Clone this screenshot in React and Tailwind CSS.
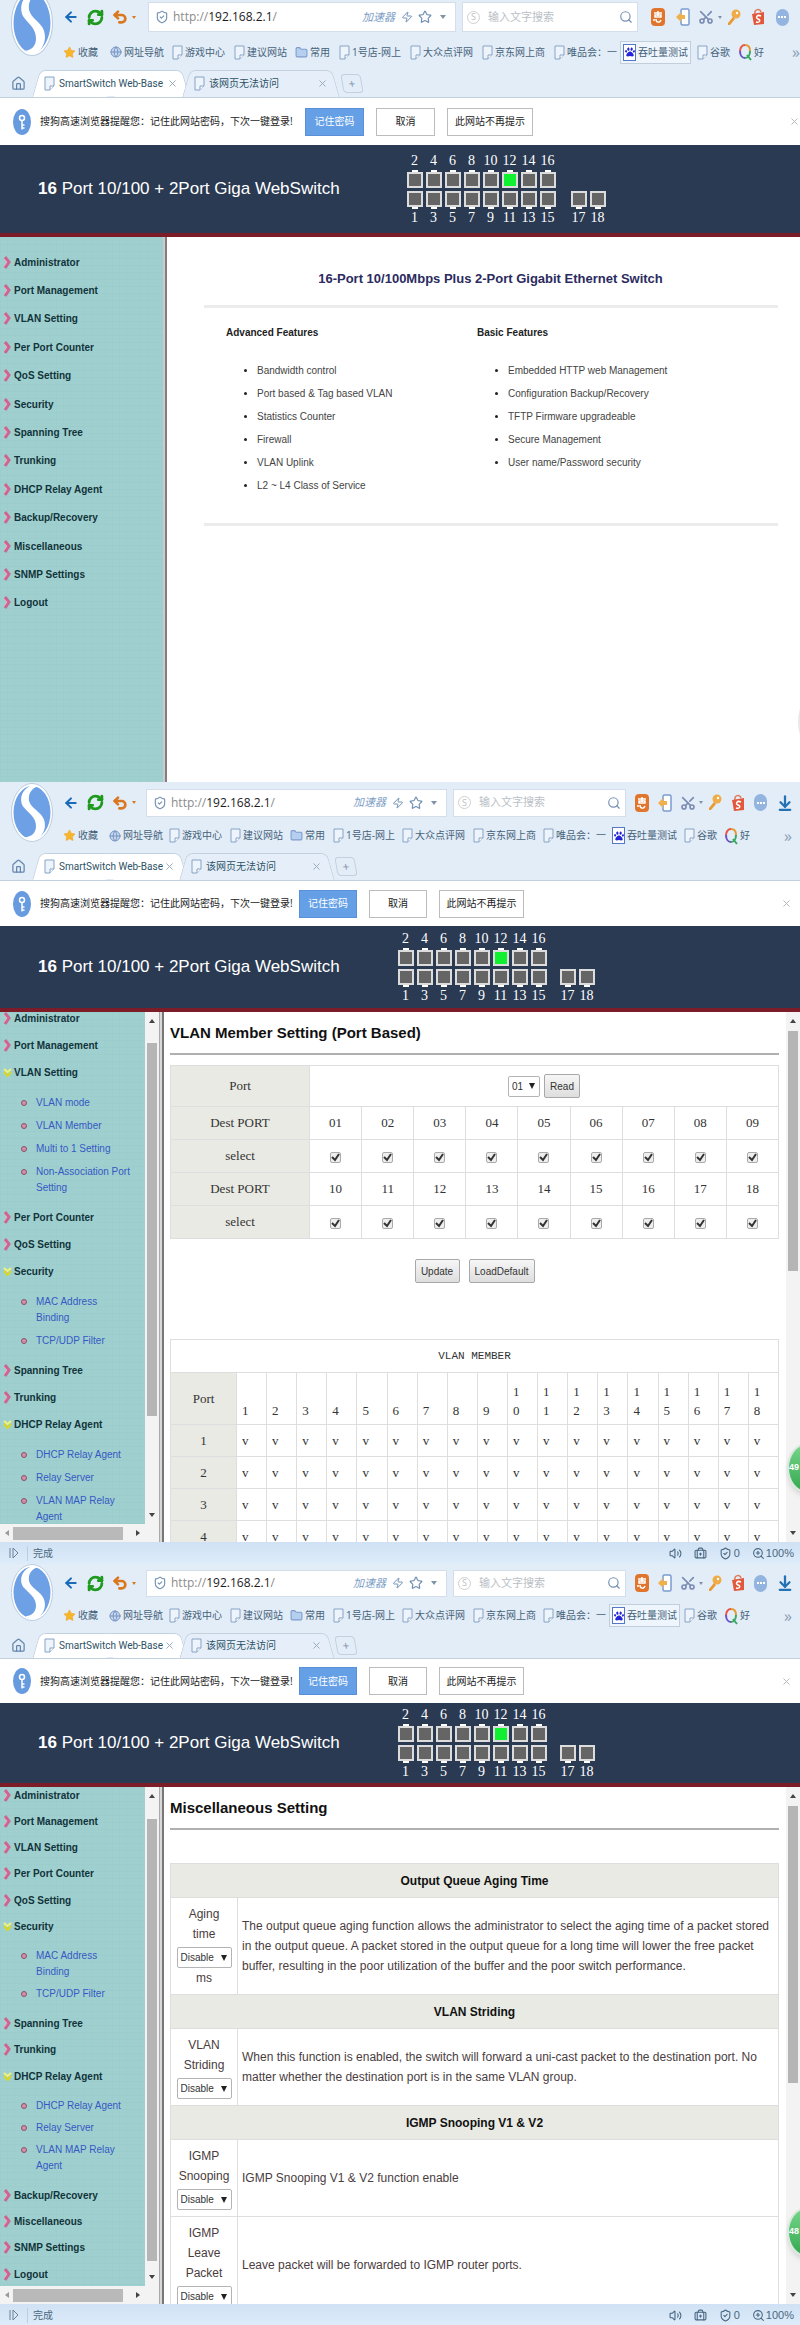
import React from "react";
import {
  ArrowLeft,
  ArrowDownToLine,
  BriefcaseMedical,
  Folder,
  Globe,
  House,
  RefreshCw,
  Scissors,
  Search,
  ShieldCheck,
  Star,
  Undo2,
  Volume2,
  X,
  Zap,
  ZoomIn,
} from "lucide-react";
import { FaPaw } from "react-icons/fa";

const BOOKMARKS = [
  { label: "收藏", icon: "star" },
  { label: "网址导航", icon: "globe" },
  { label: "游戏中心", icon: "page" },
  { label: "建议网站", icon: "page" },
  { label: "常用", icon: "folder" },
  { label: "1号店-网上", icon: "page" },
  { label: "大众点评网", icon: "page" },
  { label: "京东网上商", icon: "page" },
  { label: "唯品会：一", icon: "page" },
  { label: "吞吐量测试", icon: "paw" },
  { label: "谷歌", icon: "page" },
  { label: "好", icon: "ring" },
];

const MENU = [
  "Administrator",
  "Port Management",
  "VLAN Setting",
  "Per Port Counter",
  "QoS Setting",
  "Security",
  "Spanning Tree",
  "Trunking",
  "DHCP Relay Agent",
  "Backup/Recovery",
  "Miscellaneous",
  "SNMP Settings",
  "Logout",
];

const SUBMENU = {
  "VLAN Setting": ["VLAN mode", "VLAN Member", "Multi to 1 Setting", "Non-Association Port Setting"],
  Security: ["MAC Address Binding", "TCP/UDP Filter"],
  "DHCP Relay Agent": ["DHCP Relay Agent", "Relay Server", "VLAN MAP Relay Agent"],
};

const ADVANCED = [
  "Bandwidth control",
  "Port based & Tag based VLAN",
  "Statistics Counter",
  "Firewall",
  "VLAN Uplink",
  "L2 ~ L4 Class of Service",
];

const BASIC = [
  "Embedded HTTP web Management",
  "Configuration Backup/Recovery",
  "TFTP Firmware upgradeable",
  "Secure Management",
  "User name/Password security",
];

const PORTS = Array.from({ length: 18 }, (_, i) => i + 1);

// The home window is slightly larger than the two settings windows
const WINDOWS = {
  home: {
    toolbar: "h-[34px]",
    box: "h-[30px]",
    address: "ml-[12px]",
    search: "w-[176px]",
    tools: "w-[162px] pl-[8px]",
    tool: "w-[24px]",
    bookmarks: "h-[36px] grid-cols-[47px_62px_62px_61px_44px_71px_72px_72px_66px_77px_42px_1fr]",
    more: "pr-0",
    logo: "h-[66px] -mt-[10px]",
    tabs: "h-[28px]",
    tab: "w-[150px]",
    notice: "h-[47px]",
    noticeText: "w-[264px]",
    answer: "w-[59px]",
    never: "w-[86px]",
    close: "mr-0",
    header: "h-[92px]",
    title: "w-[367px]",
    gap: "ml-[12px]",
  },
  vlan: {
    toolbar: "h-[36px] pt-[5px]",
    box: "h-[28px]",
    address: "ml-[10px]",
    search: "w-[173px]",
    tools: "w-[174px] pl-[4px]",
    tool: "w-[23px]",
    bookmarks: "h-[35px] grid-cols-[46px_60px_61px_60px_43px_69px_71px_70px_66px_75px_41px_1fr]",
    more: "pr-[8px]",
    logo: "h-[59px] mt-[1px]",
    tabs: "h-[28px]",
    tab: "w-[147px]",
    notice: "h-[45px]",
    noticeText: "w-[258px]",
    answer: "w-[58px]",
    never: "w-[85px]",
    close: "mr-[8px]",
    header: "h-[86px]",
    title: "w-[358px]",
    gap: "ml-[10px]",
  },
  misc: {
    toolbar: "h-[34px] pt-[4px]",
    box: "h-[27px]",
    address: "ml-[10px]",
    search: "w-[173px]",
    tools: "w-[174px] pl-[4px]",
    tool: "w-[23px]",
    bookmarks: "h-[35px] grid-cols-[46px_60px_61px_60px_43px_69px_71px_70px_66px_75px_41px_1fr]",
    more: "pr-[8px]",
    logo: "h-[57px]",
    tabs: "h-[26px]",
    tab: "w-[147px]",
    notice: "h-[44px]",
    noticeText: "w-[258px]",
    answer: "w-[58px]",
    never: "w-[85px]",
    close: "mr-[8px]",
    header: "h-[84px]",
    title: "w-[358px]",
    gap: "ml-[10px]",
  },
};

const Logo = ({ className }) => (
  <svg viewBox="0 0 42 60" preserveAspectRatio="none" className={`w-[42px] shrink-0 ${className}`}>
    <ellipse cx="21" cy="30" rx="20.5" ry="29.5" fill="#fff" stroke="#b9cce0" strokeWidth="1" />
    <ellipse cx="21" cy="30" rx="18.5" ry="27" fill="#6ea0e6" />
    <path
      d="M21 2C9 7 8 19 13 25C18 31 25 35 25 44C25 51 20 55 14 55L22 59C32 55 36 46 33 37C30 29 20 26 18 18C17 11 20 6 27 3Z"
      fill="#fff"
    />
  </svg>
);

const PageIcon = () => (
  <svg width="11" height="15" viewBox="0 0 11 15" className="shrink-0" fill="#eef4fb" stroke="#86a3c6">
    <path d="M1 1h9v9l-4 4H1z" />
    <path d="M10 10H6v4" fill="#fff" />
  </svg>
);

const BookmarkIcon = ({ type }) => {
  if (type === "star") return <Star size={13} fill="#f7b52c" color="#f0a020" strokeWidth={1} />;
  if (type === "globe") return <Globe size={12} color="#7593c0" fill="#c9d8f0" strokeWidth={2} />;
  if (type === "folder") return <Folder size={13} color="#7d9ccb" fill="#b5cff0" strokeWidth={2} />;
  if (type === "paw")
    return (
      <span className="flex h-[17px] w-[13px] items-center justify-center border border-[#5577c8] bg-white">
        <FaPaw size={10} color="#2424d8" />
      </span>
    );
  if (type === "ring")
    return (
      <svg width="13" height="18" viewBox="0 0 13 18" fill="none" strokeWidth="2">
        <path d="M6 2C3 2 1 5 1 8" stroke="#e8554a" />
        <path d="M1 8C1 12 3 15 6 15" stroke="#6a53c8" />
        <path d="M6 2C10 2 11 5 11 8" stroke="#e39a35" />
        <path d="M11 8C11 12 9 15 6 15M8 12L12 17" stroke="#3aa860" />
      </svg>
    );
  return <PageIcon />;
};

const Tab = ({ title, active, width }) => (
  <div className={`relative flex h-full items-center ${width}`}>
    <span
      className={`absolute inset-y-0 left-0 w-1/2 -skew-x-[16deg] rounded-tl-md border-t border-l border-[#c3d0de] ${
        active ? "bg-white" : "bg-[#e6eff9]"
      }`}
    ></span>
    <span
      className={`absolute inset-y-0 right-0 w-1/2 skew-x-[16deg] rounded-tr-md border-t border-r border-[#c3d0de] ${
        active ? "bg-white" : "bg-[#e6eff9]"
      }`}
    ></span>
    <span className={`absolute inset-y-px left-[12px] right-[12px] ${active ? "bg-white" : "bg-[#e6eff9]"}`}></span>
    <a href="#" className="relative flex flex-1 items-center gap-[4px] pl-[8px] text-[#2c5265]">
      <PageIcon />
      <span className="font-[Roboto,'Noto_Sans_CJK_SC',sans-serif] text-[10px] whitespace-nowrap">{title}</span>
    </a>
    <button className="relative mr-[8px]" aria-label="关闭标签">
      <X size={11} color="#93a4b6" />
    </button>
  </div>
);

const BrowserChrome = ({ size, highlight }) => (
  <div className="bg-[#e3edf8]">
    <div className="flex overflow-hidden pl-[11px]">
      <Logo className={size.logo} />
      <div className="min-w-0 flex-1 pl-[10px]">
        <div className={`flex items-center ${size.toolbar}`}>
          <button aria-label="后退">
            <ArrowLeft size={16} color="#1a6ab8" strokeWidth={3} />
          </button>
          <button className="ml-[8px]" aria-label="刷新">
            <RefreshCw size={17} color="#1f9a1f" strokeWidth={4} />
          </button>
          <button className="ml-[8px] flex items-center gap-[4px]" aria-label="恢复">
            <Undo2 size={16} color="#d9781e" strokeWidth={4} />
            <span className="border-x-2 border-t-3 border-x-transparent border-t-[#d9781e]"></span>
          </button>
          <div className={`flex min-w-0 flex-1 items-center border border-[#d3deea] bg-white px-[6px] ${size.box} ${size.address}`}>
            <ShieldCheck size={14} color="#7793b5" className="shrink-0" />
            <a href="#" className="ml-[4px] text-xs text-[#8b8b8b]">
              http://<span className="text-[#1c1c1c]">192.168.2.1</span>/
            </a>
            <span className="ml-auto text-[11px] text-[#7ea0c6] italic">加速器</span>
            <Zap size={12} color="#7593b5" className="ml-[6px]" />
            <Star size={14} color="#6f8fb4" className="ml-[5px]" />
            <span className="mr-[3px] ml-[8px] border-x-3 border-t-4 border-x-transparent border-t-[#8093a8]"></span>
          </div>
          <div className={`ml-[6px] flex shrink-0 items-center border border-[#d3deea] bg-white px-[4px] ${size.box} ${size.search}`}>
            <span className="flex size-[13px] shrink-0 items-center justify-center rounded-full border border-[#d0d0d0] text-[9px] text-[#c0c0c0]">
              S
            </span>
            <input
              aria-label="搜索"
              placeholder="输入文字搜索"
              className="ml-[8px] w-full min-w-0 text-[11px] outline-none placeholder:text-[#b9c0c6]"
            />
            <Search size={14} color="#7490b4" className="shrink-0" />
          </div>
          <div className={`flex shrink-0 items-center overflow-hidden ${size.tools}`}>
            <button className={`flex shrink-0 justify-center ${size.tool}`} aria-label="优惠">
              <span className="flex h-[18px] w-[14px] items-center justify-center rounded-sm bg-[#e2752c]">
                <svg width="10" height="12" viewBox="0 0 10 12" fill="none" stroke="#fff" strokeWidth="1.5">
                  <path d="M1 2h8M5 0v5M2 4h6v2H2zM1 8v2M3 8c0 4 4 4 5 1" />
                </svg>
              </span>
            </button>
            <button className={`flex shrink-0 justify-center ${size.tool}`} aria-label="手机">
              <svg width="15" height="18" viewBox="0 0 15 18">
                <rect x="6" y="1" width="8" height="16" rx="1.5" fill="#fff" stroke="#7b9ccd" strokeWidth="1.5" />
                <path d="M1 9L6 4v3h4v4H6v3z" fill="#f1b04a" />
              </svg>
            </button>
            <button className={`flex shrink-0 items-center justify-center ${size.tool}`} aria-label="截图">
              <Scissors size={16} color="#7c8cb4" strokeWidth={2.5} className="-rotate-90" />
            </button>
            <span className="shrink-0 border-x-2 border-t-3 border-x-transparent border-t-[#8093a8]"></span>
            <button className={`flex shrink-0 justify-center ${size.tool}`} aria-label="密码">
              <svg width="14" height="17" viewBox="0 0 14 17">
                <circle cx="9" cy="5" r="4.500" fill="#f0ac48" />
                <circle cx="10" cy="4" r="1.200" fill="#fff" />
                <path d="M6 8L1 14v2h2l5-6" fill="#e89a34" />
              </svg>
            </button>
            <button className={`flex shrink-0 justify-center ${size.tool}`} aria-label="购物">
              <svg width="14" height="18" viewBox="0 0 14 18" fill="none">
                <path d="M4 6C3 1 9 0 10 4" stroke="#e07a5c" strokeWidth="1.5" />
                <path d="M1 6L13 4V16L3 17Z" fill="#e2583c" />
                <path d="M10 8C6 6 4 10 7 11C10 12 9 15 5 14" stroke="#fff" strokeWidth="1.5" />
              </svg>
            </button>
            <button className={`flex shrink-0 justify-center ${size.tool}`} aria-label="更多">
              <span className="flex h-[17px] w-[13px] items-center justify-center gap-px rounded-full bg-[#94b4e0]">
                <i className="size-[2px] bg-white"></i>
                <i className="size-[2px] bg-white"></i>
                <i className="size-[2px] bg-white"></i>
              </span>
            </button>
            <button className="ml-[4px] flex shrink-0 justify-center" aria-label="下载">
              <ArrowDownToLine size={18} color="#2272b4" strokeWidth={3} />
            </button>
          </div>
        </div>
        <div className={`grid items-center ${size.bookmarks}`}>
          {BOOKMARKS.map((item) => (
            <div key={item.label} className="flex items-center justify-between">
              <a
                href="#"
                className={`flex items-center gap-[2px] text-[10px] whitespace-nowrap text-[#45627a] ${
                  item.icon === "paw" ? "border px-[2px]" : ""
                } ${item.icon === "paw" && highlight ? "border-[#c3cedb] bg-[#eff5fc] py-[2px] text-[#1f2f3c]" : "border-transparent"}`}
              >
                <BookmarkIcon type={item.icon} />
                {item.label}
              </a>
              {item.icon === "ring" && <span className={`text-base text-[#8a9db3] ${size.more}`}>»</span>}
            </div>
          ))}
        </div>
      </div>
    </div>
    <div className={`flex items-center border-b border-[#c3d0de] ${size.tabs}`}>
      <button className="mr-[10px] ml-[11px]" aria-label="主页">
        <House size={15} color="#6486ad" />
      </button>
      <div className="flex h-full">
        <Tab title="SmartSwitch Web-Base" active width={size.tab} />
        <Tab title="该网页无法访问" width={size.tab} />
      </div>
      <button
        className="ml-[6px] flex h-[19px] w-[20px] skew-x-[10deg] items-center justify-center rounded-sm border border-[#c3d0de] text-xs text-[#7f92a6]"
        aria-label="新标签"
      >
        +
      </button>
    </div>
  </div>
);

const Notice = ({ size }) => (
  <div className={`flex items-center bg-white pl-[13px] text-[10px] text-[#222] ${size.notice}`}>
    <span className="flex h-[26px] w-[18px] items-center justify-center rounded-[50%] bg-[#679be0]">
      <svg width="8" height="16" viewBox="0 0 8 16" fill="none" stroke="#fff" strokeWidth="1.5">
        <circle cx="4" cy="4" r="2.5" />
        <path d="M4 6.500v9M4 11h2.500M4 14h2.500" />
      </svg>
    </span>
    <p className={`pl-[9px] whitespace-nowrap ${size.noticeText}`}>搜狗高速浏览器提醒您：记住此网站密码，下次一键登录!</p>
    <button className={`ml-[10px] h-[28px] border border-[#5b90d8] bg-[#65a0e6] text-white ${size.answer}`}>记住密码</button>
    <button className={`ml-[12px] h-[28px] border border-[#bcbcbc] ${size.answer}`}>取消</button>
    <button className={`ml-[12px] h-[28px] border border-[#bcbcbc] ${size.never}`}>此网站不再提示</button>
    <button className={`ml-auto ${size.close}`} aria-label="关闭">
      <X size={11} color="#b4b4b4" />
    </button>
  </div>
);

const Port = ({ number, up }) => (
  <span className="flex h-[18px] w-[16px] flex-col items-center">
    {up && <i className="h-[2px] w-[6px] bg-white"></i>}
    <i
      className={`w-full flex-1 border-2 border-[#dcdcdc] ${number === 12 ? "bg-[#10f030]" : "bg-[#656565]"}`}
    ></i>
    {!up && <i className="h-[2px] w-[6px] bg-white"></i>}
  </span>
);

const PortColumn = ({ top, bottom }) => (
  <div className="flex w-[19px] flex-col items-center">
    <span className="h-[17px] leading-[17px]">{top}</span>
    <span className="flex h-[19px] items-center">{top && <Port number={top} up />}</span>
    <span className="mt-[2px] flex h-[19px] items-center">
      <Port number={bottom} />
    </span>
    <span className="h-[17px] leading-[17px]">{bottom}</span>
  </div>
);

const SwitchHeader = ({ size }) => (
  <div className={`flex items-center border-b-4 border-[#7c1c28] bg-[#2a3a52] pl-[38px] text-white ${size.header}`}>
    <h1 className={`text-[17px] whitespace-nowrap ${size.title}`}>
      <b>16</b> Port 10/100 + 2Port Giga WebSwitch
    </h1>
    <div className="flex font-['Liberation_Serif',serif] text-sm">
      {[1, 3, 5, 7, 9, 11, 13, 15].map((n) => (
        <PortColumn key={n} top={n + 1} bottom={n} />
      ))}
      <div className={`flex ${size.gap}`}>
        <PortColumn bottom={17} />
        <PortColumn bottom={18} />
      </div>
    </div>
  </div>
);

const Chevron = ({ open }) =>
  open ? (
    <svg width="9" height="9" viewBox="0 0 9 9" fill="none" strokeWidth="2">
      <path d="M1 1L4.500 4L8 1" stroke="#f2f27a" />
      <path d="M1 4L4.500 8L8 4" stroke="#d8d820" />
    </svg>
  ) : (
    <svg width="9" height="13" viewBox="0 0 9 13" fill="none">
      <path d="M2 1L6 6L2 12" stroke="#cc6690" strokeWidth="3" />
      <path d="M1 3L4 6L1 10" stroke="#e9a9c2" />
    </svg>
  );

const Menu = ({ open = [], items = MENU, listClass, rowClass, subClass }) => (
  <ul className={`flex flex-col ${listClass}`}>
    {items.map((item) => (
      <li key={item}>
        <a href="#" className={`flex items-center gap-[2px] pl-[3px] text-[10px] font-bold text-[#12333a] ${rowClass}`}>
          <Chevron open={open.includes(item)} />
          {item}
        </a>
        {open.includes(item) && (
          <ul className={`pt-[9px] pl-[21px] ${subClass}`}>
            {SUBMENU[item].map((sub) => (
              <li key={sub} className="flex gap-[9px] text-[10px] leading-[16px] text-[#3658c4]">
                <i className="mt-[5px] size-[6px] shrink-0 rounded-full border border-[#8c5068] bg-[#d090a8]"></i>
                <a href="#" className="w-[95px]">
                  {sub}
                </a>
              </li>
            ))}
          </ul>
        )}
      </li>
    ))}
  </ul>
);

const tealTexture =
  "bg-[#9fd0cf] bg-[linear-gradient(#9ccdcd_1px,transparent_1px),linear-gradient(90deg,#9ccecd_1px,transparent_1px)] bg-[size:7px_7px]";

const FrameScroll = ({ thumb }) => (
  <div className="flex w-[14px] shrink-0 flex-col items-center bg-[#f3f3f3] py-[7px]">
    <i className="border-x-3 border-b-4 border-x-transparent border-b-[#444]"></i>
    <i className={`w-[10px] bg-[#b5b5b5] ${thumb}`}></i>
    <i className="mt-auto border-x-3 border-t-4 border-x-transparent border-t-[#444]"></i>
  </div>
);

const SideFrame = ({ thumb, children }) => (
  <nav className="flex w-[159px] shrink-0 flex-col">
    <div className="flex min-h-0 flex-1">
      <div className={`flex-1 overflow-hidden ${tealTexture}`}>{children}</div>
      <FrameScroll thumb={thumb} />
    </div>
    <div className="flex h-[18px] items-center bg-[#f3f3f3] pr-[19px] pl-[5px]">
      <i className="border-y-3 border-r-4 border-y-transparent border-r-[#999]"></i>
      <i className="ml-[4px] h-[13px] w-[110px] bg-[#b9b9b9]"></i>
      <i className="ml-auto border-y-3 border-l-4 border-y-transparent border-l-[#444]"></i>
    </div>
  </nav>
);

const Divider = () => <div className="w-[5px] shrink-0 border-r-2 border-l border-r-[#777] border-l-[#aaa] bg-[#d8d8d8]"></div>;

const StatusBar = () => (
  <div className="flex h-[22px] items-center bg-linear-to-b from-[#cfe1f4] to-[#deecfa] pl-[9px] text-[11px] text-[#4a6880]">
    <svg width="10" height="12" viewBox="0 0 10 12" fill="none" stroke="#6b8096">
      <path d="M1 1v10M4 1v10l5-5z" />
    </svg>
    <span className="ml-[8px] border-l border-[#bccfe2] pl-[5px] text-[10px]">完成</span>
    <div className="mr-[6px] ml-auto flex items-center">
      <Volume2 size={13} />
      <BriefcaseMedical size={13} className="ml-[12px]" />
      <ShieldCheck size={13} className="ml-[12px]" />
      <span className="ml-[2px]">0</span>
      <ZoomIn size={13} className="ml-[12px]" />
      <span className="ml-[1px]">100%</span>
    </div>
  </div>
);

const SpeedBall = ({ value, place }) => (
  <div
    className={`absolute -right-[27px] flex h-[50px] w-[40px] items-center rounded-[50%] border-2 border-[#d8e8dc] bg-linear-to-b from-[#74d68a] to-[#31a850] text-[9px] font-bold text-white shadow-md ${place}`}
  >
    {value}
  </div>
);

const FeatureList = ({ title, items }) => (
  <section className="text-[10px] text-[#444]">
    <h3 className="text-[10px] leading-[16px] font-bold text-[#222]">{title}</h3>
    <ul className="mt-[18px] list-disc pl-[31px] leading-[23px] marker:text-[#222]">
      {items.map((item) => (
        <li key={item}>{item}</li>
      ))}
    </ul>
  </section>
);

const HomePage = () => (
  <div className="relative flex h-[545px] overflow-hidden">
    <nav className={`w-[163px] shrink-0 pt-[11px] ${tealTexture}`}>
      <Menu listClass="h-[369px] justify-between" rowClass="h-[28px]" />
    </nav>
    <div className="w-[4px] shrink-0 border-r-2 border-[#857d80] bg-[#c8cccc]"></div>
    <main className="flex-1 pt-[32px] pr-[22px] pl-[37px]">
      <h2 className="pr-[1px] text-center text-[13px] leading-[20px] font-bold text-[#2b2b60]">
        16-Port 10/100Mbps Plus 2-Port Gigabit Ethernet Switch
      </h2>
      <div className="mt-[16px] grid h-[221px] grid-cols-[251px_1fr] border-y-3 border-[#ececec] pt-[17px] pl-[22px]">
        <FeatureList title="Advanced Features" items={ADVANCED} />
        <FeatureList title="Basic Features" items={BASIC} />
      </div>
    </main>
    <div className="absolute right-[-14px] bottom-[40px] h-[40px] w-[16px] rounded-[50%] bg-[#e8e8e8]"></div>
  </div>
);

const grayButton =
  "rounded-xs border border-[#a8a8a8] bg-linear-to-b from-[#f6f6f6] to-[#dedede] text-[10px] text-[#333]";

const SelectBox = ({ label, value, className }) => (
  <span className={`relative inline-flex items-center ${className}`}>
    <select
      aria-label={label}
      className="h-[21px] w-full appearance-none rounded-xs border border-[#b4b4b4] bg-white pl-[3px] text-[10px] leading-[19px] text-[#333]"
    >
      <option>{value}</option>
    </select>
    <i className="pointer-events-none absolute right-[5px] border-x-3 border-t-6 border-x-transparent border-t-[#222]"></i>
  </span>
);

const PageTitle = ({ children }) => (
  <h2 className="border-b-2 border-[#b0b0b0] pt-[9px] pb-[8px] text-[15px] leading-[24px] font-bold text-[#111]">
    {children}
  </h2>
);

const portCell = "border border-[#dedede] text-center font-normal";

const PortRows = ({ ports }) => (
  <>
    <tr className="h-[33px]">
      <th className={`${portCell} bg-[#e9eae4]`}>Dest PORT</th>
      {ports.map((p) => (
        <td key={p} className={portCell}>
          {String(p).padStart(2, "0")}
        </td>
      ))}
    </tr>
    <tr className="h-[33px]">
      <th className={`${portCell} bg-[#e9eae4]`}>select</th>
      {ports.map((p) => (
        <td key={p} className={portCell}>
          <label className="relative inline-flex align-middle">
            <input
              type="checkbox"
              defaultChecked
              aria-label={`Port ${p}`}
              className="peer size-[11px] appearance-none rounded-xs border border-[#aaa] bg-[#eee]"
            />
            <svg
              viewBox="0 0 11 11"
              className="absolute inset-0 size-[11px] opacity-0 peer-checked:opacity-100"
              fill="none"
              stroke="#333"
              strokeWidth="2"
            >
              <path d="M2 5L5 8L9 2" />
            </svg>
          </label>
        </td>
      ))}
    </tr>
  </>
);

const VlanPage = () => (
  <div className="relative flex h-[530px] overflow-hidden">
    <SideFrame thumb="mt-[20px] h-[373px]">
      <Menu
        open={["VLAN Setting", "Security", "DHCP Relay Agent"]}
        items={MENU.slice(0, 9)}
        listClass="-mt-[7px]"
        rowClass="h-[27px]"
        subClass="space-y-[7px] pb-[8px]"
      />
    </SideFrame>
    <Divider />
    <main className="min-w-0 flex-1 pr-[7px] pl-[6px]">
      <PageTitle>VLAN Member Setting (Port Based)</PageTitle>
      <table className="mt-[10px] w-full table-fixed border-collapse border border-[#dedede] font-['Liberation_Serif',serif] text-[13px] text-[#333]">
        <colgroup>
          <col className="w-[139px]" />
        </colgroup>
        <tbody>
          <tr className="h-[41px]">
            <th className={`${portCell} bg-[#e9eae4]`}>Port</th>
            <td colSpan={9} className={portCell}>
              <div className="flex items-center justify-center gap-[4px] font-['Liberation_Sans',sans-serif]">
                <SelectBox label="Port" value="01" className="w-[32px]" />
                <button className={`${grayButton} h-[24px] w-[36px]`}>Read</button>
              </div>
            </td>
          </tr>
          <PortRows ports={PORTS.slice(0, 9)} />
          <PortRows ports={PORTS.slice(9)} />
        </tbody>
      </table>
      <div className="mt-[20px] flex justify-center gap-[9px]">
        <button className={`${grayButton} h-[24px] w-[45px]`}>Update</button>
        <button className={`${grayButton} h-[24px] w-[66px]`}>LoadDefault</button>
      </div>
      <table className="mt-[56px] w-full table-fixed border-collapse font-['Liberation_Serif',serif] text-[13px] text-[#333]">
        <colgroup>
          <col className="w-[66px]" />
        </colgroup>
        <thead>
          <tr className="h-[33px]">
            <th colSpan={19} className={`${portCell} font-['Liberation_Mono',monospace] text-[11px]`}>
              VLAN MEMBER
            </th>
          </tr>
          <tr className="h-[52px]">
            <th className={`${portCell} bg-[#e9eae4]`}>Port</th>
            {PORTS.map((p) => (
              <th
                key={p}
                className="border border-[#dedede] pr-[17px] pb-[4px] pl-[5px] text-left align-bottom leading-[19px] font-normal break-all"
              >
                {p}
              </th>
            ))}
          </tr>
        </thead>
        <tbody>
          {[1, 2, 3, 4].map((row) => (
            <tr key={row} className="h-[32px]">
              <th className={`${portCell} bg-[#e9eae4]`}>{row}</th>
              {PORTS.map((p) => (
                <td key={p} className="border border-[#dedede] pl-[5px]">
                  v
                </td>
              ))}
            </tr>
          ))}
        </tbody>
      </table>
    </main>
    <FrameScroll thumb="mt-[8px] h-[240px]" />
    <SpeedBall value="49" place="top-[431px]" />
  </div>
);

const Heading = ({ children }) => (
  <tr className="h-[34px] bg-[#e9eae4]">
    <th colSpan={2} className="border border-[#dedede] font-bold text-[#111]">
      {children}
    </th>
  </tr>
);

const Setting = ({ lines, unit, children }) => (
  <tr>
    <td className="border border-[#dedede] py-[6px] text-center">
      {lines.map((line) => (
        <div key={line}>{line}</div>
      ))}
      <SelectBox label={lines.join(" ")} value="Disable" className="mt-[3px] w-[55px] align-top" />
      {unit && <div>{unit}</div>}
    </td>
    <td className="border border-[#dedede] pl-[4px]">{children}</td>
  </tr>
);

const MiscPage = () => (
  <div className="relative flex h-[517px] overflow-hidden">
    <SideFrame thumb="mt-[21px] h-[442px]">
      <Menu
        open={["Security", "DHCP Relay Agent"]}
        listClass="-mt-[5px] h-[505px] justify-between"
        rowClass="h-[26px]"
        subClass="space-y-[6px] pb-[8px]"
      />
    </SideFrame>
    <Divider />
    <main className="min-w-0 flex-1 pr-[7px] pl-[6px]">
      <PageTitle>Miscellaneous Setting</PageTitle>
      <table className="mt-[33px] w-full table-fixed border-collapse text-xs leading-[20px] text-[#4a3c40]">
        <colgroup>
          <col className="w-[67px]" />
          <col />
        </colgroup>
        <tbody>
          <Heading>Output Queue Aging Time</Heading>
          <Setting lines={["Aging", "time"]} unit="ms">
            The output queue aging function allows the administrator to select the aging time of a packet stored
            <br />
            in the output queue. A packet stored in the output queue for a long time will lower the free packet
            <br />
            buffer, resulting in the poor utilization of the buffer and the poor switch performance.
          </Setting>
          <Heading>VLAN Striding</Heading>
          <Setting lines={["VLAN", "Striding"]}>
            When this function is enabled, the switch will forward a uni-cast packet to the destination port. No
            <br />
            matter whether the destination port is in the same VLAN group.
          </Setting>
          <Heading>IGMP Snooping V1 & V2</Heading>
          <Setting lines={["IGMP", "Snooping"]}>IGMP Snooping V1 & V2 function enable</Setting>
          <Setting lines={["IGMP", "Leave", "Packet"]}>Leave packet will be forwarded to IGMP router ports.</Setting>
        </tbody>
      </table>
    </main>
    <FrameScroll thumb="mt-[8px] h-[277px]" />
    <SpeedBall value="48" place="top-[420px]" />
  </div>
);

const BrowserWindow = ({ size, highlight, status, children }) => (
  <section className="overflow-hidden">
    <div className="font-['Open_Sans','Noto_Sans_CJK_SC',sans-serif]">
      <BrowserChrome size={size} highlight={highlight} />
      <Notice size={size} />
    </div>
    <SwitchHeader size={size} />
    {children}
    {status && <StatusBar />}
  </section>
);

const App = () => {
  return (
    <div className="w-full overflow-hidden bg-white font-['Liberation_Sans','Noto_Sans_CJK_SC',sans-serif]">
      <BrowserWindow size={WINDOWS.home} highlight>
        <HomePage />
      </BrowserWindow>
      <BrowserWindow size={WINDOWS.vlan} status>
        <VlanPage />
      </BrowserWindow>
      <BrowserWindow size={WINDOWS.misc} highlight status>
        <MiscPage />
      </BrowserWindow>
    </div>
  );
};

export default App;
